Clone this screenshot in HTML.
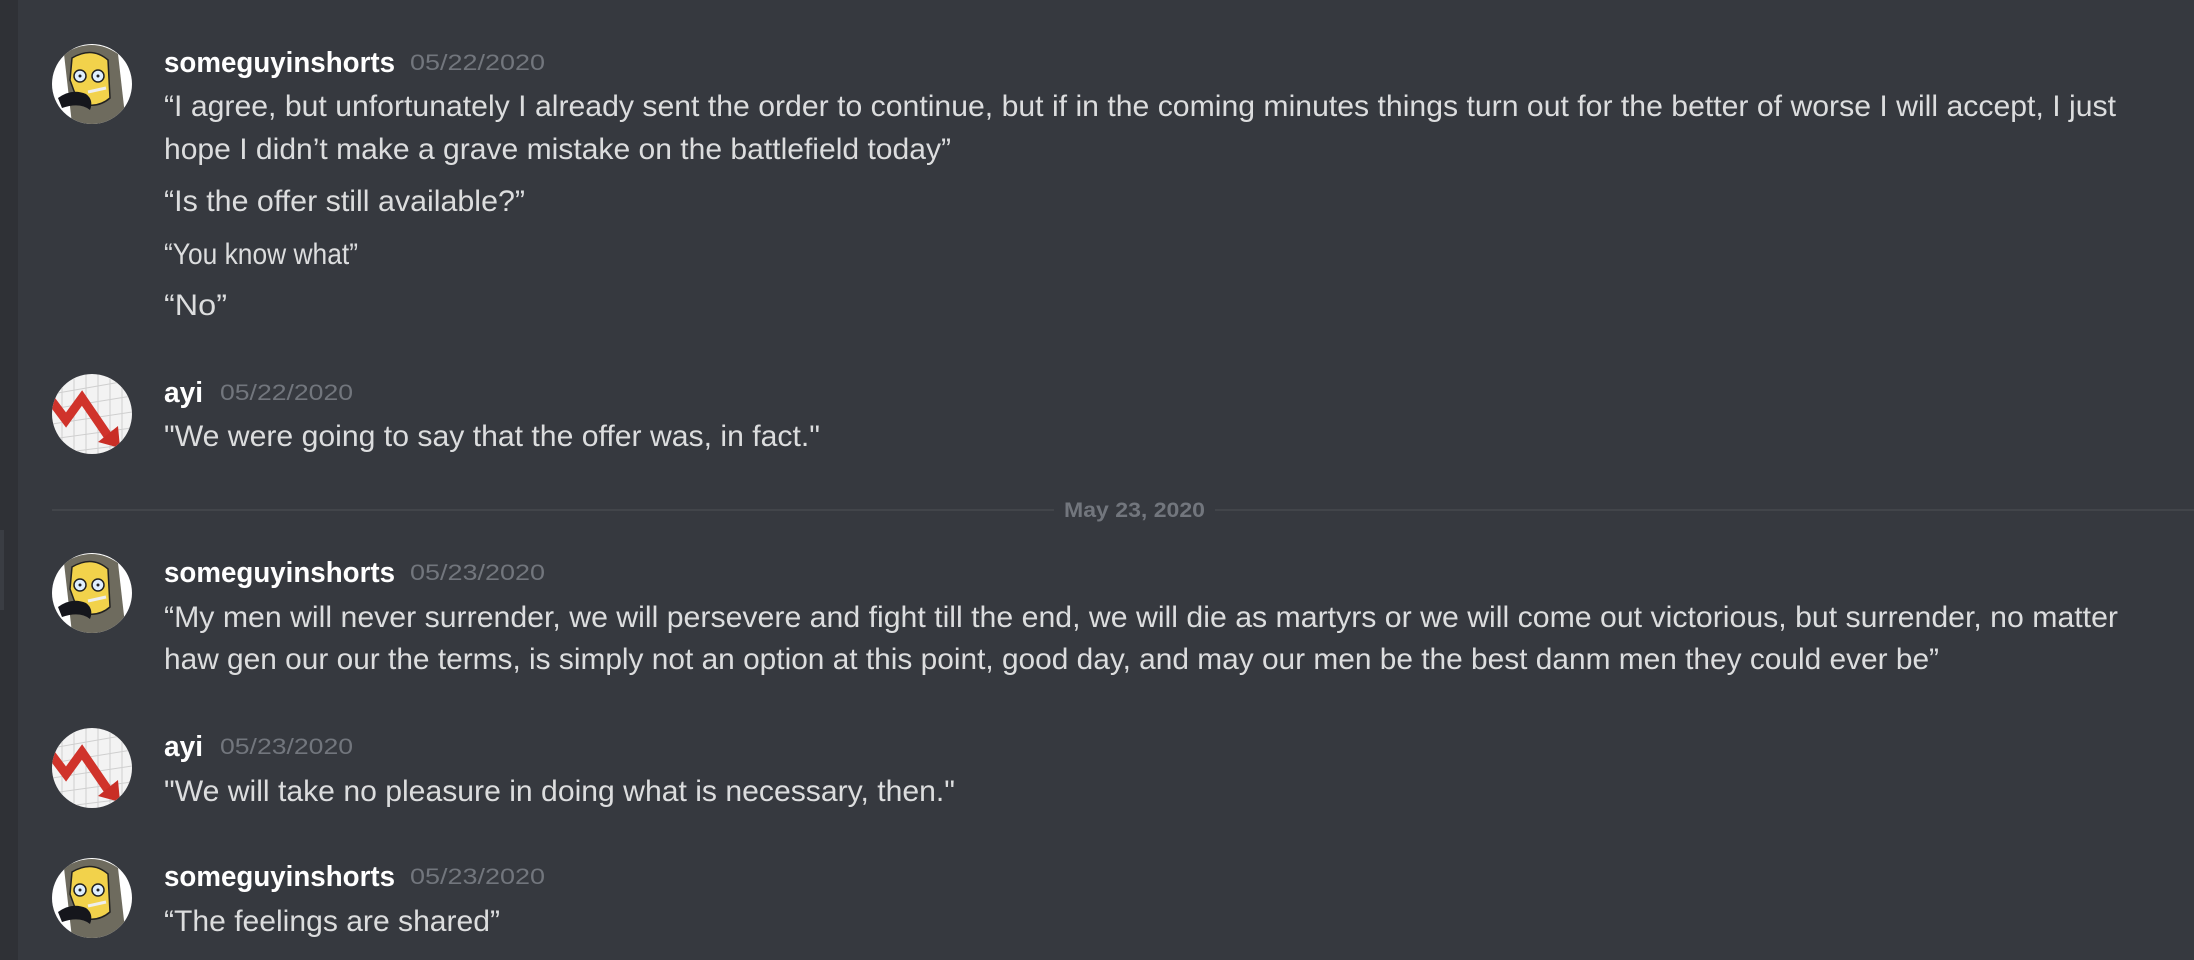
<!DOCTYPE html>
<html><head><meta charset="utf-8"><style>
html,body{margin:0;padding:0;background:#36393f;width:2194px;height:960px;overflow:hidden}
svg{display:block}
.t{font-family:"Liberation Sans",sans-serif;font-size:30px;fill:#dcddde}
.n{font-family:"Liberation Sans",sans-serif;font-size:29px;font-weight:bold;fill:#ffffff}
.s{font-family:"Liberation Sans",sans-serif;font-size:22px;fill:#72767d}
.d{font-family:"Liberation Sans",sans-serif;font-size:21px;font-weight:bold;fill:#72767d}
</style></head><body>
<svg width="2194" height="960" viewBox="0 0 2194 960" xmlns="http://www.w3.org/2000/svg">
<defs>
<g id="simp">
  <circle cx="0" cy="0" r="40" fill="#ffffff"/>
  <clipPath id="cc"><circle cx="0" cy="0" r="40"/></clipPath>
  <g clip-path="url(#cc)">
    <path d="M-28 -30 Q0 -48 26 -30 L34 40 L-20 40 Z" fill="#6e6b5e"/>
    <path d="M-20 -26 Q0 -38 16 -24 L18 14 Q4 26 -14 18 L-22 -4 Z" fill="#f2d24b" stroke="#222" stroke-width="1.5"/>
    <circle cx="-12" cy="-8" r="6" fill="#dfefff" stroke="#222" stroke-width="1.5"/>
    <circle cx="6" cy="-8" r="6" fill="#dfefff" stroke="#222" stroke-width="1.5"/>
    <circle cx="-12" cy="-8" r="1.5" fill="#222"/><circle cx="6" cy="-8" r="1.5" fill="#222"/>
    <path d="M-34 14 Q-20 4 -6 10 Q2 16 -2 26 Q-12 18 -30 24 Z" fill="#15161c"/>
    <path d="M-4 8 L14 4" stroke="#eee" stroke-width="3"/>
  </g>
</g>
<g id="ayi">
  <circle cx="0" cy="0" r="40" fill="#f3f3f3"/>
  <clipPath id="ca"><circle cx="0" cy="0" r="40"/></clipPath>
  <g clip-path="url(#ca)" stroke="#cfcfcf" stroke-width="1">
    <path d="M-40 -20 L40 -34 M-40 -5 L40 -18 M-40 10 L40 -2 M-40 25 L40 14 M-40 40 L40 30 M-30 -40 L-30 40 M-18 -40 L-18 40 M-6 -40 L-6 40 M6 -40 L6 40 M18 -40 L18 40 M30 -40 L30 40"/>
    <path d="M-44 -18 L-26 6 L-10 -16 L16 22" stroke="#d0332b" stroke-width="9" fill="none" stroke-linejoin="miter"/>
    <path d="M6 28 L28 34 L26 12 Z" fill="#c92e26" stroke="none"/>
  </g>
</g>
</defs>
<rect x="0" y="0" width="18" height="960" fill="#2f3136"/>
<rect x="0" y="530" width="4" height="80" fill="#3a3d43"/>

<use href="#simp" x="92" y="84"/>
<text class="n" x="164" y="72" textLength="231" lengthAdjust="spacingAndGlyphs">someguyinshorts</text>
<text class="s" x="410" y="70" textLength="135" lengthAdjust="spacingAndGlyphs">05/22/2020</text>
<text class="t" x="164" y="116" textLength="1952" lengthAdjust="spacingAndGlyphs">“I agree, but unfortunately I already sent the order to continue, but if in the coming minutes things turn out for the better of worse I will accept, I just</text>
<text class="t" x="164" y="159" textLength="787" lengthAdjust="spacingAndGlyphs">hope I didn’t make a grave mistake on the battlefield today”</text>
<text class="t" x="164" y="211" textLength="361" lengthAdjust="spacingAndGlyphs">“Is the offer still available?”</text>
<text class="t" x="164" y="264" textLength="194" lengthAdjust="spacingAndGlyphs">“You know what”</text>
<text class="t" x="164" y="315" textLength="63" lengthAdjust="spacingAndGlyphs">“No”</text>

<use href="#ayi" x="92" y="414"/>
<text class="n" x="164" y="402" textLength="39" lengthAdjust="spacingAndGlyphs">ayi</text>
<text class="s" x="220" y="400" textLength="133" lengthAdjust="spacingAndGlyphs">05/22/2020</text>
<text class="t" x="164" y="446" textLength="656" lengthAdjust="spacingAndGlyphs">"We were going to say that the offer was, in fact."</text>

<line x1="52" y1="510" x2="1054" y2="510" stroke="#42454a" stroke-width="2"/>
<line x1="1215" y1="510" x2="2194" y2="510" stroke="#42454a" stroke-width="2"/>
<text class="d" x="1064" y="517" textLength="141" lengthAdjust="spacingAndGlyphs">May 23, 2020</text>

<use href="#simp" x="92" y="593"/>
<text class="n" x="164" y="582" textLength="231" lengthAdjust="spacingAndGlyphs">someguyinshorts</text>
<text class="s" x="410" y="580" textLength="135" lengthAdjust="spacingAndGlyphs">05/23/2020</text>
<text class="t" x="164" y="627" textLength="1954" lengthAdjust="spacingAndGlyphs">“My men will never surrender, we will persevere and fight till the end, we will die as martyrs or we will come out victorious, but surrender, no matter</text>
<text class="t" x="164" y="669" textLength="1775" lengthAdjust="spacingAndGlyphs">haw gen our our the terms, is simply not an option at this point, good day, and may our men be the best danm men they could ever be”</text>

<use href="#ayi" x="92" y="768"/>
<text class="n" x="164" y="756" textLength="39" lengthAdjust="spacingAndGlyphs">ayi</text>
<text class="s" x="220" y="754" textLength="133" lengthAdjust="spacingAndGlyphs">05/23/2020</text>
<text class="t" x="164" y="801" textLength="791" lengthAdjust="spacingAndGlyphs">"We will take no pleasure in doing what is necessary, then."</text>

<use href="#simp" x="92" y="898"/>
<text class="n" x="164" y="886" textLength="231" lengthAdjust="spacingAndGlyphs">someguyinshorts</text>
<text class="s" x="410" y="884" textLength="135" lengthAdjust="spacingAndGlyphs">05/23/2020</text>
<text class="t" x="164" y="931" textLength="336" lengthAdjust="spacingAndGlyphs">“The feelings are shared”</text>
</svg>
</body></html>
